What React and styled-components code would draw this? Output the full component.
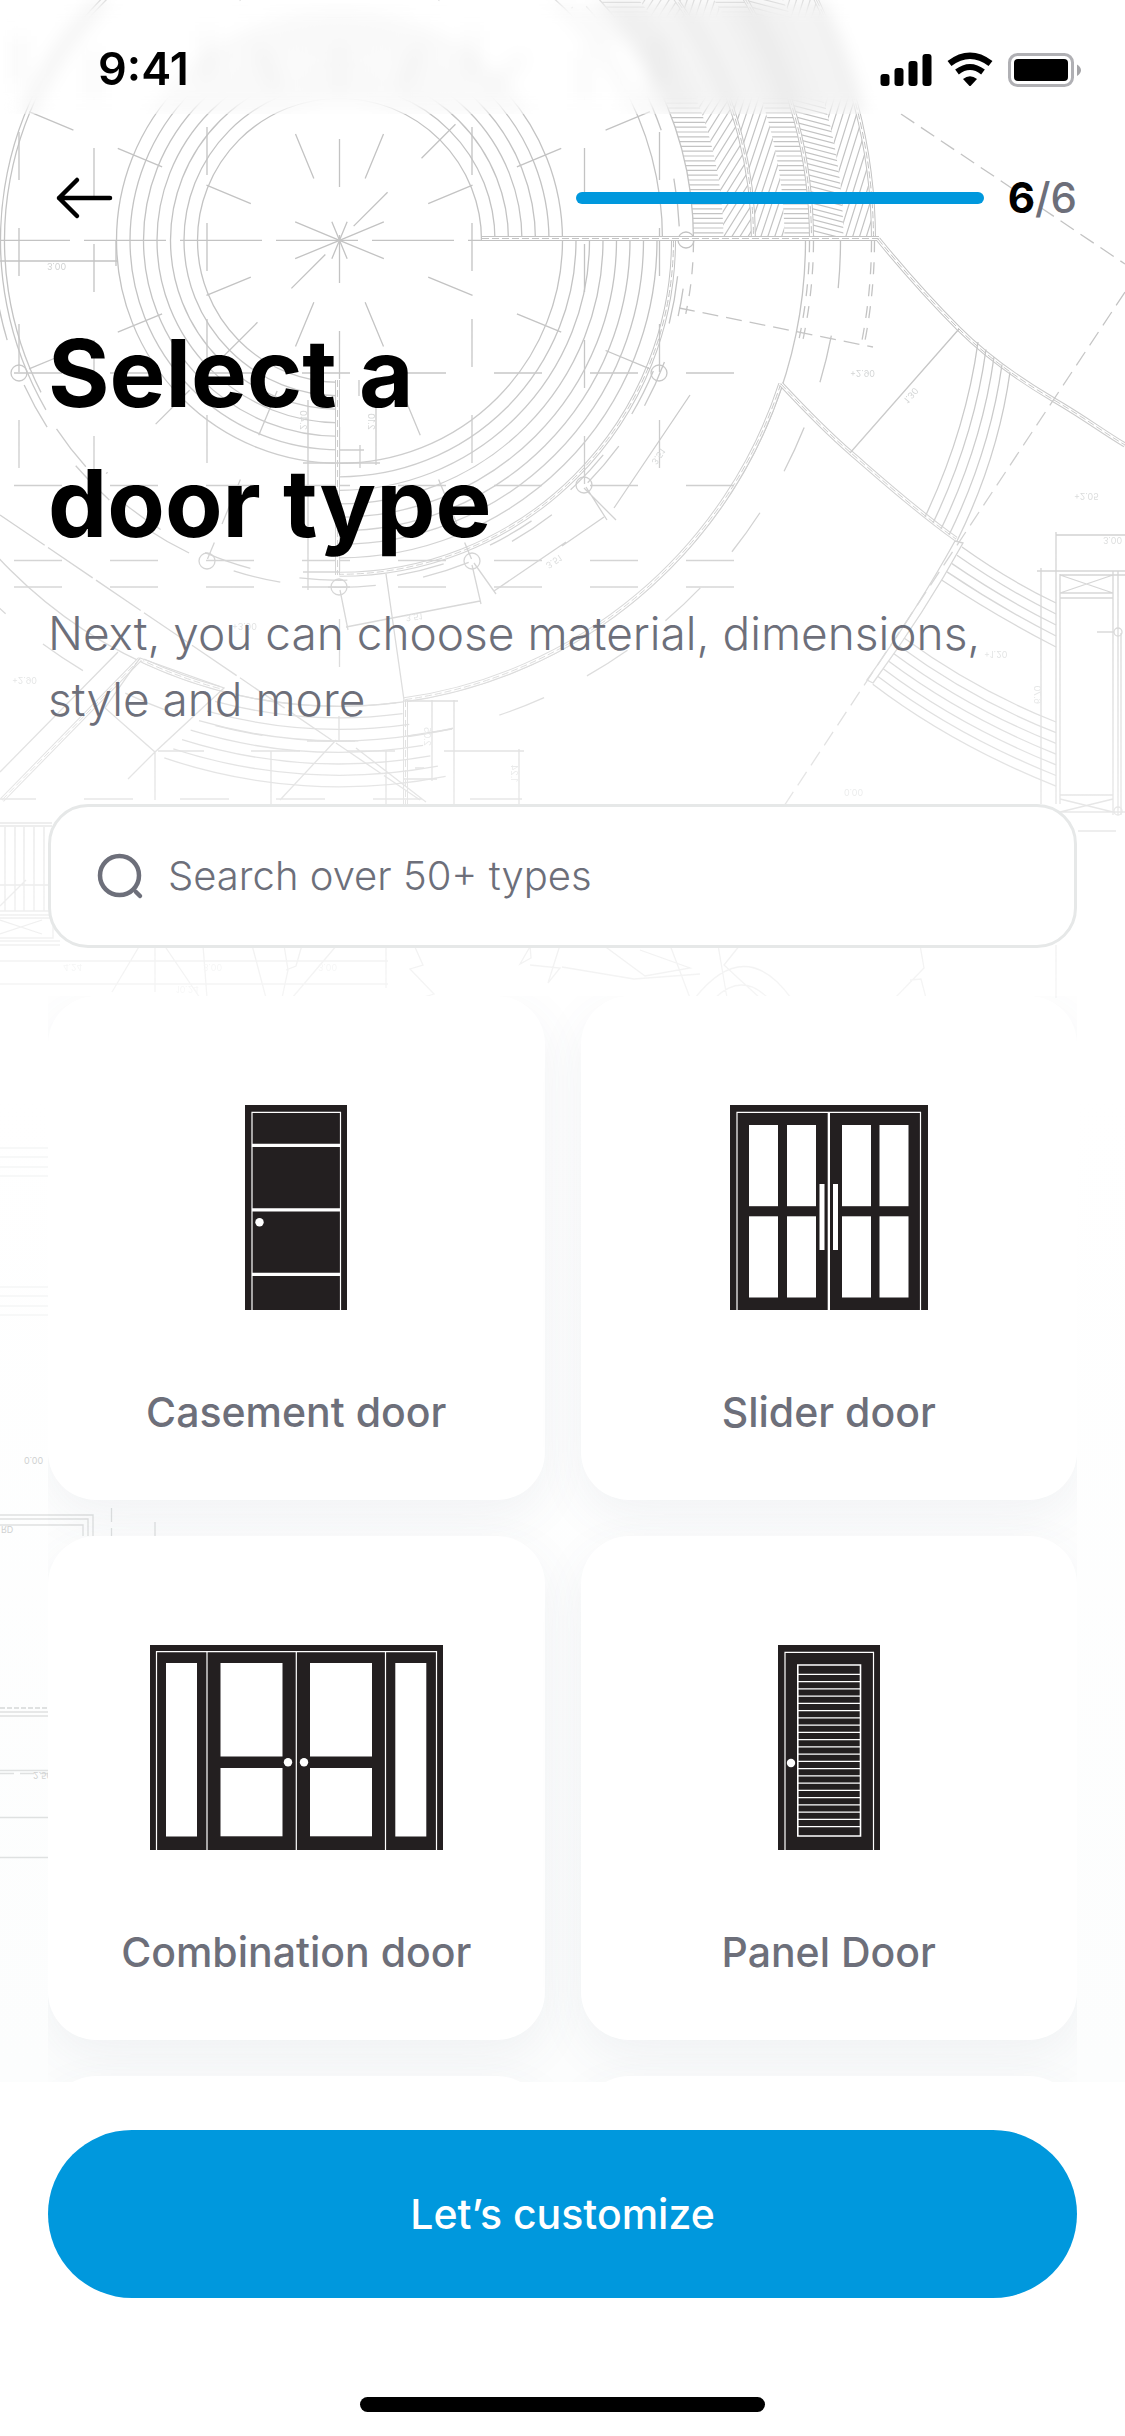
import React from "react";
import styled, { createGlobalStyle } from "styled-components";

const GlobalStyle = createGlobalStyle`
  *, *::before, *::after { box-sizing: border-box; }
  body {
    margin: 0;
    background: #fff;
    font-family: Inter, "Liberation Sans", sans-serif;
    color: #000;
  }
  button, input { font-family: inherit; }
`;

const ink = "#6d6f7a";
const blue = "#0098dd";

const Screen = styled.div`
  position: relative;
  isolation: isolate;
  height: 100vh;
  display: flex;
  flex-direction: column;
  overflow: hidden;
  background: linear-gradient(#fff 45%, #fcfdfd 85%);
`;

const Backdrop = styled.svg`
  position: absolute;
  z-index: -1;
  top: 0;
  left: 0;
  width: 100%;
  fill: none;
  stroke: #c3c3c3;
  stroke-width: 1.3;
`;

const StatusBar = styled.div`
  display: flex;
  align-items: center;
  justify-content: space-between;
  height: 114px;
  padding: 24px 42px 0 98px;
  backdrop-filter: blur(9px);
`;

const Clock = styled.time`
  font-size: 45px;
  font-weight: 600;
  line-height: 54px;
`;

const StatusIcons = styled.svg`
  width: 203px;
  height: 36px;
`;

const Header = styled.header`
  display: flex;
  align-items: center;
  justify-content: space-between;
  padding: 54px 48px 0;
`;

const BackButton = styled.button`
  display: flex;
  padding: 0;
  border: 0;
  background: none;
  cursor: pointer;
  svg { width: 72px; height: 60px; }
`;

const Steps = styled.div`
  display: flex;
  align-items: center;
  gap: 24px;
`;

const Progress = styled.div`
  width: 408px;
  height: 12px;
  border-radius: 6px;
  background: ${blue};
`;

const StepCount = styled.span`
  font-size: 42px;
  line-height: 60px;
  font-weight: 500;
  color: ${ink};
  b { font-weight: 700; color: #000; }
`;

const Intro = styled.section`
  display: flex;
  flex-direction: column;
  gap: 32px;
  padding: 80px 48px 72px;
`;

const Title = styled.h1`
  margin: 0;
  font-size: 94px;
  line-height: 130px;
  font-weight: 700;
`;

const Lead = styled.p`
  margin: 0;
  font-size: 46px;
  line-height: 66px;
  font-weight: 300;
  color: ${ink};
`;

const SearchBox = styled.label`
  flex: none;
  display: flex;
  align-items: center;
  gap: 22px;
  height: 144px;
  margin: 0 48px 48px;
  padding: 0 44px;
  border: 3px solid #e6e8e8;
  border-radius: 40px;
  background: #fff;
  svg { flex: none; width: 51px; height: 51px; }
`;

const SearchInput = styled.input`
  flex: 1;
  min-width: 0;
  padding: 0;
  border: 0;
  outline: 0;
  background: none;
  font-size: 40px;
  line-height: 54px;
  font-weight: 300;
  color: ${ink};
  &::placeholder { color: ${ink}; opacity: 1; }
`;

const Grid = styled.div`
  flex: 1;
  min-height: 0;
  display: grid;
  grid-template-columns: 1fr 1fr;
  grid-auto-rows: 504px;
  gap: 36px;
  margin: 0 48px;
  overflow: hidden;
`;

const Card = styled.button`
  display: flex;
  flex-direction: column;
  align-items: center;
  gap: 75px;
  padding: 109px 24px 61px;
  border: 0;
  border-radius: 48px;
  background: #fff;
  box-shadow: 0 16px 48px rgba(80, 92, 120, 0.075);
  cursor: pointer;
`;

const CardLabel = styled.span`
  font-size: 41px;
  line-height: 54px;
  font-weight: 500;
  color: ${ink};
`;

const Footer = styled.footer`
  display: flex;
  flex-direction: column;
  align-items: center;
  gap: 99px;
  padding: 48px 48px 24px;
  background: #fff;
`;

const PrimaryButton = styled.button`
  width: 100%;
  height: 168px;
  border: 0;
  border-radius: 84px;
  background: ${blue};
  color: #fff;
  font-size: 41px;
  font-weight: 500;
  cursor: pointer;
`;

const HomeIndicator = styled.div`
  width: 405px;
  height: 15px;
  border-radius: 8px;
  background: #000;
`;

/* ---------- blueprint drawing ---------- */

const CX = 339.5;
const CY = 240.3;
const at = (r, deg) => {
  const a = (deg * Math.PI) / 180;
  return [CX + r * Math.cos(a), CY + r * Math.sin(a)];
};
const arc = (r, from, to) => {
  const [x1, y1] = at(r, from);
  const [x2, y2] = at(r, to);
  return `M${x1} ${y1}A${r} ${r} 0 ${to - from > 180 ? 1 : 0} 1 ${x2} ${y2}`;
};
const range = (n) => Array.from({ length: n }, (_, i) => i);
const band = (inner, outer) => `${arc(outer, -70, 0)}L${CX + inner} ${CY}A${inner} ${inner} 0 0 0 ${at(inner, -70).join(" ")}Z`;

const hatchBands = [
  { id: "h1", inner: 354, outer: 384, slope: 0 },
  { id: "h2", inner: 384, outer: 412, slope: -1.6 },
  { id: "h3", inner: 416, outer: 445, slope: -3 },
  { id: "h4", inner: 445, outer: 470, slope: 0 },
  { id: "h5", inner: 474, outer: 504, slope: 0.26 },
  { id: "h6", inner: 504, outer: 532, slope: -3.2 },
];

const Hatch = ({ id, inner, outer, slope }) => {
  const pitch = Math.max(4.8, Math.abs(slope) * 5.6 + 4);
  const d = range(140)
    .map((i) => {
      const y = -420 + i * pitch;
      return `M440 ${y - slope * 200}L900 ${y + slope * 260}`;
    })
    .join("");
  return (
    <>
      <clipPath id={id}><path d={band(inner, outer)} /></clipPath>
      <path d={d} clipPath={`url(#${id})`} strokeWidth="1.2" />
    </>
  );
};

const Note = ({ x, y, turn = 0, children }) => (
  <text transform={`translate(${x} ${y}) rotate(${turn}) scale(1 -1)`} fontSize="9" fill="#d0d2d2" stroke="none">
    {children}
  </text>
);

const Wall = ({ d }) => (
  <>
    <path d={d} strokeWidth="5" />
    <path d={d} strokeWidth="3" stroke="#fff" />
    <path d={d} strokeWidth="1" strokeDasharray="7 3" />
  </>
);

const columns = [[19, 373], [659, 373], [686, 240], [207, 561], [472, 561], [339, 587], [584, 485]];

const Blueprint = () => (
  <Backdrop viewBox="0 0 1125 2082" aria-hidden="true">
    <defs>
      <linearGradient id="fade" x1="0" y1="0" x2="0" y2="1">
        <stop offset="0" stopColor="#fff" />
        <stop offset="0.3" stopColor="#fff" />
        <stop offset="0.55" stopColor="#fff" stopOpacity="0.68" />
        <stop offset="0.78" stopColor="#fff" stopOpacity="0.36" />
        <stop offset="1" stopColor="#fff" stopOpacity="0.06" />
      </linearGradient>
      <mask id="fadeMask" maskUnits="userSpaceOnUse" x="0" y="-20" width="1125" height="1100">
        <rect y="-20" width="1125" height="1100" fill="url(#fade)" stroke="none" />
      </mask>
    </defs>

    <g mask="url(#fadeMask)">
      {/* concentric rings of the round hall */}
      {range(7).map((i) => <path key={i} d={arc(142 + i * 13.5, 90, 360)} />)}
      {range(8).map((i) => <path key={i} d={arc(223 + i * 13.5, 0, 90)} />)}
      <path d={arc(339, 150, 228)} />
      <path d={arc(335, 153, 228)} />
      <path d={`${arc(323, -60, 0)}${arc(354, -60, 0)}`} />
      <path d={arc(340, -60, 152)} strokeDasharray="48 50" />
      <path d={arc(347, 8, 175)} strokeDasharray="48 48" strokeDashoffset="20" />
      <path d={arc(501, 0, 160)} strokeDasharray="48 48" />
      <path d={arc(466, 0, 180)} />
      <Wall d={arc(334, 0, 90)} />
      <Wall d={arc(464, 18, 82)} />
      <Wall d={arc(464, 105, 115)} />
      <path d={`${arc(470, 0, 12)}${arc(474, 0, 12)}${arc(532, 0, 11)}${arc(535, 0, 11)}${arc(354, 0, 12)}`} strokeDasharray="12 10" />
      {hatchBands.map((b) => <Hatch key={b.id} {...b} />)}
      <Wall d={arc(414, -60, 0)} />
      <Wall d={arc(472, -60, 0)} />
      <Wall d={arc(534, -60, 0)} />

      {/* radial axes */}
      {[22.5, 157.5, 202.5, 337.5].map((a) => (
        <path key={a} d={`M${CX} ${CY}L${at(336, a).join(" ")}`} strokeDasharray="48 48" />
      ))}
      {[67.5, 112.5, 247.5, 292.5].map((a) => (
        <path key={a} d={`M${CX} ${CY}L${at(345, a).join(" ")}`} strokeDasharray="20 47 48 48 48 48 48" />
      ))}
      {[135, 315].map((a) => (
        <path key={a} d={`M${CX} ${CY}L${at(330, a).join(" ")}`} strokeDasharray="0 20 48 48 48 48 48 48" />
      ))}
      {[[19, 132], [94, 148], [207, 127], [339.5, 139], [472, 127], [584.5, 148], [659.5, 132]].map(([x, y]) => (
        <path key={x} d={`M${x} ${y - 96}V${x === 339.5 ? 680 : 485}`} strokeDasharray="48 48" />
      ))}
      <path d="M0 240.3H482" strokeDasharray="82 14" strokeDashoffset="12" />
      {[373, 485.5, 560.5, 587].map((y) => (
        <path key={y} d={`M14 ${y}H740`} strokeDasharray="48 48" />
      ))}
      {columns.map(([x, y]) => <circle key={`${x}${y}`} cx={x} cy={y} r="8" />)}

      {/* walls */}
      <Wall d="M482 238.500H879" />
      <Wall d="M337.500 380V575" />
      <Wall d="M878 239C905 272 930 300 959 329S1020 380 1054 400S1100 430 1125 445" />
      <Wall d="M781 384C810 415 830 435 851 453S915 510 956 539" />
      <Wall d="M140 659L2 800" />
      <Wall d="M405.500 700V806" />
      <path d="M140 658L224 688L155 752L105 708ZM118 652L0 772M155 752L128 779M155 752V800" />
      <path d="M901 114L1125 264M1125 292L780 812" strokeDasharray="16 8" />
      <path d="M679 308L873 347" strokeDasharray="16 8" />
      <path d="M0 515L420 800" strokeDasharray="54 4" />

      {/* stair flights */}
      {range(5).map((i) => (
        <path key={i} d={`M${978 + i * 8} ${342 + i * 7.5}Q${966 + i * 8} ${430 + i * 7} ${925 + i * 8} ${517 + i * 6}`} />
      ))}
      {range(5).map((i) => (
        <path key={i} d={`M${962 - i * 5} ${547 + i * 8.3}Q${1008 - i * 3} ${580 + i * 9} 1056 ${603 + i * 11}`} />
      ))}
      {range(7).map((i) => (
        <path key={i} d={`M${904 - i * 5.2} ${638 + i * 7.7}Q${975 - i * 4} ${690 + i * 9} 1056 ${722 + i * 10.7}`} />
      ))}
      {range(8).map((i) => (
        <path key={i} d={arc(466 + i * 11.5, 83 - i * 0.6, 104.500 + i * 0.6)} />
      ))}
      <path d="M955 541L963 543Q925 612 873 683L867 680Q918 608 955 541ZM959 329L850 453" />

      {/* wings and dimension lines */}
      <path d="M1056 532V804M1060 574V804M1056 535H1125M1056 571H1125M1060 575H1125M1060 593H1113M1060 598H1113M1060 575L1113 593M1113 575L1060 593M1113 571V815M1118 571V815M1041 568V804M1037 571H1056M1097 632H1114M1121 633V815M1060 795H1113M1060 799L1113 812M1113 799L1060 812M1056 812H1125M1078 831H1116" />
      <circle cx="1118" cy="632" r="4" />
      <circle cx="1118" cy="811" r="4" />
      <path d="M308 400V590M303 463H380M376 400V465M303 572H340M340 450H364M360 445V468M359 380V396M0 261H118M116 240V266M346 627L480 601M340 590L348 630M386 574L404 700M472 565L481 604M474 563L496 594M494 591L566 542M584 488L616 520M586 487L607 520M604 517L562 546M614 508L690 395" />
      <path d="M404 701H458M432 700V781M454 700V804M404 779H437M415 768H424M408 736L452 729M444 751H524M519 749V804M271 751V804M386 751V804M158 751H204M251 751H300M347 751H395M0 799H36M84 799H133M180 799H229M276 799H325M373 799H422M470 799H522M307 741H355M339 716V742M336 740L280 800M356 748L426 802" />
      <path d="M0 823H52M0 826H52M5 827V911M15 827V911M24 827V911M34 827V911M44 827V911M0 885H50M0 911H50M0 915H50M0 918H53V938H0M0 941H60M0 945H60M0 920L42 934M42 920L0 934M26 880L0 906" />
      <path d="M0 961H388M0 984H388M155 945V992M386 945V988M140 945L112 992M164 945L200 998M203 945L207 998M252 945L266 998M284 945L288 970L282 998M302 945L296 966L286 970M337 945L292 998M414 945L423 965L410 969L434 994L420 998M531 945L520 964L531 958L530 945M530 965L560 968L548 983L560 945M603 945L645 976L690 968L640 950M562 967L634 979L700 974M670 945L690 998M718 945L727 998M740 945L724 965L738 978L760 998M695 998Q745 935 791 998M715 998Q742 972 768 998M920 945L924 968L895 998M910 980L921 979L926 998M1056 945V998" />

      <Note x={47} y={263}>3.00</Note>
      <Note x={850} y={370}>+2.90</Note>
      <Note x={903} y={400} turn={-50}>1.30</Note>
      <Note x={1074} y={493}>+2.05</Note>
      <Note x={1103} y={537}>3.00</Note>
      <Note x={984} y={651}>+1.20</Note>
      <Note x={844} y={789}>0.00</Note>
      <Note x={1034} y={704} turn={-90}>6.70</Note>
      <Note x={300} y={430} turn={-90}>2.40</Note>
      <Note x={368} y={430} turn={-90}>2.10</Note>
      <Note x={232} y={623}>+3.00</Note>
      <Note x={405} y={615} turn={-8}>3.51</Note>
      <Note x={545} y={564} turn={-35}>3.51</Note>
      <Note x={651} y={462} turn={-57}>3.51</Note>
      <Note x={12} y={677}>+2.90</Note>
      <Note x={424} y={746} turn={-90}>2.05</Note>
      <Note x={511} y={782} turn={-90}>1.24</Note>
      <Note x={63} y={964}>4.24</Note>
      <Note x={203} y={964}>3.00</Note>
      <Note x={318} y={964}>3.00</Note>
      <Note x={176} y={986}>10.24</Note>
    </g>

    <g stroke="#dfe1e1">
      <path d="M0 1515H93V1536M0 1519H88V1536M0 1525H83V1536M155 1522V1536M0 1712H48M0 1716H48M0 1770.500H48M0 1817.500H48M0 1857.500H48" />
      <path d="M111.500 1508V1540M0 1773.500H48" strokeDasharray="14 6" />
      <path d="M0 1708H48" strokeWidth="2" strokeDasharray="5 2" />
      <path d="M0 1148H48M0 1157H48M0 1167H48M0 1176H48M0 1287H48M0 1296H48M0 1306H48M0 1315H48" stroke="#f5f6f6" />
      <Note x={24} y={1457}>0.00</Note>
      <Note x={1} y={1526}>RD</Note>
      <Note x={33} y={1772}>2.50</Note>
    </g>
  </Backdrop>
);

/* ---------- door pictograms ---------- */

const dark = "#231f20";

const DoorSvg = ({ width, children }) => (
  <svg width={width} height="205" viewBox={`0 0 ${width} 205`} fill="#fff" aria-hidden="true">
    <rect width={width} height="205" fill={dark} />
    {children}
  </svg>
);

const Line = (props) => <path fill="none" stroke="#fff" strokeWidth="1.2" {...props} />;

const CasementDoor = () => (
  <DoorSvg width={102}>
    <Line d="M7 205V7.300H95.500V205" />
    <path d="M7 38.700H95.500V42H7ZM7 103.300H95.500V106.600H7ZM7 167.700H95.500V171H7Z" />
    <circle cx="14.5" cy="117.3" r="4.2" />
  </DoorSvg>
);

const SliderDoor = () => (
  <DoorSvg width={198}>
    <Line d="M7 205V7.300H190.500V205" />
    {[19, 57, 112, 149.500].map((x) =>
      [20, 111.300].map((y) => <rect key={`${x}-${y}`} x={x} y={y} width="29" height="81.200" />)
    )}
    <rect x="97.700" y="7" width="2.300" height="198" />
    <rect x="89.500" y="79" width="5" height="66" />
    <rect x="103" y="79" width="5" height="66" />
  </DoorSvg>
);

const CombinationDoor = () => (
  <DoorSvg width={293}>
    <Line d="M6.500 205V6.700H286.500V205M57 7V205M146.300 7V205M235.500 7V205" />
    <rect x="16" y="18" width="31" height="173.500" />
    <rect x="245.300" y="18" width="31" height="173.500" />
    {[70.500, 160].map((x) => (
      <React.Fragment key={x}>
        <rect x={x} y="18" width="62" height="93.500" />
        <rect x={x} y="123" width="62" height="68.300" />
      </React.Fragment>
    ))}
    <circle cx="138" cy="117.300" r="4.2" />
    <circle cx="154" cy="117.300" r="4.2" />
  </DoorSvg>
);

const PanelDoor = () => (
  <DoorSvg width={102}>
    <Line d="M7 205V7.300H95.500V205" />
    <Line d="M19.800 20H82.500V191H19.800Z" strokeWidth="1.600" />
    <Line d={range(22).map((i) => `M20 ${29.300 + i * 7.250}H83`).join("")} />
    <circle cx="13" cy="118" r="4.2" />
  </DoorSvg>
);

const doors = [
  { name: "Casement door", Icon: CasementDoor },
  { name: "Slider door", Icon: SliderDoor },
  { name: "Combination door", Icon: CombinationDoor },
  { name: "Panel Door", Icon: PanelDoor },
];

export default function App() {
  return (
    <Screen>
      <GlobalStyle />
      <Blueprint />
      <StatusBar>
        <Clock>9:41</Clock>
        <StatusIcons viewBox="0 0 203 36" aria-hidden="true">
          <rect x="0.500" y="23" width="9" height="12" rx="3" />
          <rect x="14.500" y="17" width="9" height="18" rx="3" />
          <rect x="28.500" y="10" width="9" height="25" rx="3" />
          <rect x="42.500" y="3" width="9" height="32" rx="3" />
          <g fill="none" stroke="#000">
            <path d="M69.500 12.500Q90 -3 110.500 12.500" strokeWidth="6.500" />
            <path d="M77 21Q90 11 103 21" strokeWidth="6" />
          </g>
          <path d="M83 28Q90 22.500 97 28L91 34.500Q90 35.500 89 34.500Z" />
          <rect x="129.500" y="3.500" width="63" height="31" rx="8" fill="#fff" stroke="#b0b0b4" strokeWidth="3" />
          <rect x="134" y="8" width="54" height="22" rx="4" />
          <path d="M197 13.500V25Q201 22.500 201 19.200Q201 16 197 13.500Z" fill="#a5a5a8" />
        </StatusIcons>
      </StatusBar>

      <Header>
        <BackButton aria-label="Back">
          <svg viewBox="0 0 72 60" fill="none" stroke="#000" strokeWidth="4.500" strokeLinecap="round" strokeLinejoin="round">
            <path d="M62 30H11M29 12L11 30L29 48" />
          </svg>
        </BackButton>
        <Steps>
          <Progress role="progressbar" aria-label="Step" aria-valuenow={6} aria-valuemax={6} />
          <StepCount><b>6</b>/6</StepCount>
        </Steps>
      </Header>

      <Intro>
        <Title>Select a<br />door type</Title>
        <Lead>Next, you can choose material, dimensions, style and more</Lead>
      </Intro>

      <SearchBox>
        <svg viewBox="0 0 51 51" fill="none" stroke={ink} strokeWidth="4.500" strokeLinecap="round" aria-hidden="true">
          <circle cx="24.500" cy="24.500" r="19.500" />
          <path d="M41 41L45 45" />
        </svg>
        <SearchInput type="search" aria-label="Search door types" placeholder="Search over 50+ types" />
      </SearchBox>

      <Grid>
        {doors.map(({ name, Icon }) => (
          <Card key={name}>
            <Icon />
            <CardLabel>{name}</CardLabel>
          </Card>
        ))}
        <Card aria-hidden="true" tabIndex={-1} />
        <Card aria-hidden="true" tabIndex={-1} />
      </Grid>

      <Footer>
        <PrimaryButton>Let’s customize</PrimaryButton>
        <HomeIndicator />
      </Footer>
    </Screen>
  );
}
